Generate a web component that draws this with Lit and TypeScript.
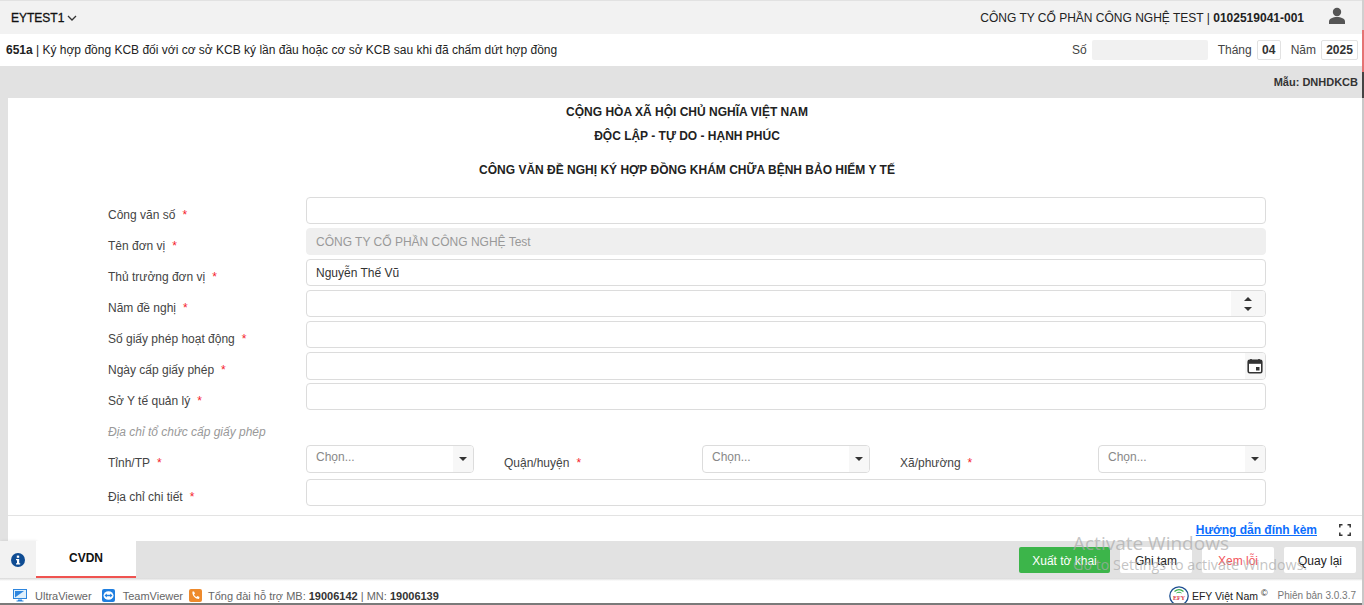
import { LitElement, html, css } from "lit";
import { customElement } from "lit/decorators.js";

const field = (label: string, body: unknown) => html`
  <div class="row">
    <label class="lab">${label}<i class="req">*</i></label>
    ${body}
  </div>`;

const select = () => html`<div class="inp sel"><span class="ph">Chọn...</span><span class="addon caret"><b></b></span></div>`;

@customElement("app-root")
export class AppRoot extends LitElement {
  static styles = css`
    :host { display: block; width: 1364px; height: 605px; overflow: hidden; position: relative; font-family: "Liberation Sans", Arial, sans-serif; font-size: 12px; color: #212529; background: #fff; }
    * { box-sizing: border-box; }
    .page { display: flex; flex-direction: column; height: 605px; }
    .top { height: 34px; flex: none; background: #f2f2f2; border-top: 1px solid #e2e2e2; display: flex; align-items: center; padding: 0 18px 0 11px; justify-content: space-between; }
    .acct { display: flex; align-items: center; gap: 3px; color: #111; -webkit-text-stroke: .3px #111; }
    .co { display: flex; align-items: center; gap: 24px; color: #222; }
    .co svg { margin-top: -4px; }
    .sub { height: 32px; flex: none; background: #fff; display: flex; align-items: center; justify-content: space-between; padding: 0 6px 0 6px; }
    .sub .title { margin-top: -1px; color: #222; }
    .meta { display: flex; align-items: center; color: #444; }
    .so { width: 116px; height: 20px; background: #f1f1f1; border-radius: 2px; margin: 0 10px 0 5px; }
    .box { height: 20px; border: 1px solid #e2e2e2; border-radius: 2px; font-weight: 700; color: #333; display: flex; align-items: center; justify-content: center; }
    .m { width: 24px; margin: 0 10px 0 5px; }
    .y { width: 37px; margin-left: 5px; }
    .band { height: 32px; flex: none; background: #e2e2e2; display: flex; align-items: center; justify-content: flex-end; padding: 0 6px 0 0; font-size: 11px; font-weight: 700; color: #333; }
    .main { flex: 1; min-height: 0; background: #e2e2e2; padding-left: 8px; display: flex; }
    .panel { flex: 1; background: #fff; display: flex; flex-direction: column; }
    .heads { height: 99px; flex: none; display: flex; flex-direction: column; align-items: center; font-weight: 700; color: #222; }
    .heads div { line-height: 14px; margin-right: -2px; }
    .h1 { margin-top: 7px; }
    .h2 { margin-top: 10px; }
    .h3 { margin-top: 20px; }
    .form { height: 319px; flex: none; padding-left: 100px; border-bottom: 1px solid #e3e3e3; }
    .row { display: grid; grid-template-columns: 198px 960px; height: 31px; align-items: start; }
    .lab { color: #444; line-height: 14px; padding-top: 11px; }
    .req { font-style: normal; color: #f5222d; margin-left: 7px; }
    .inp { height: 27px; border: 1px solid #dcdcdc; border-radius: 4px; background: #fff; display: flex; align-items: center; padding-left: 9px; color: #333; overflow: hidden; }
    .dis { background: #efefef; color: #999; border-color: #efefef; }
    .addon { margin-left: auto; height: 100%; display: flex; align-items: center; justify-content: center; background: #f7f7f7; }
    .spin { width: 34px; flex-direction: column; gap: 6px; }
    .spin b { width: 0; height: 0; border-left: 4px solid transparent; border-right: 4px solid transparent; }
    .up { border-bottom: 4px solid #333; }
    .dn { border-top: 4px solid #333; }
    .cal { width: 20px; }
    .h28 { height: 28px; }
    .addr { font-style: italic; color: #999; height: 31px; line-height: 14px; padding-top: 11px; }
    .sel { height: 28px; width: 168px; }
    .ph { color: #888; margin-top: -4px; }
    .caret { width: 20px; }
    .caret b { width: 0; height: 0; border-left: 4px solid transparent; border-right: 4px solid transparent; border-top: 4px solid #333; }
    .tri { display: flex; height: 34px; }
    .tcell { display: flex; width: 396px; }
    .tcell .lab { width: 198px; }
    .links { height: 25px; flex: none; display: flex; align-items: center; justify-content: flex-end; gap: 22px; padding: 3px 13px 0 0; }
    .links a { color: #0d6efd; font-weight: 700; text-decoration: underline; }
    .tabs { height: 37px; flex: none; background: #e2e2e2; display: flex; align-items: stretch; margin-left: -8px; }
    .info { width: 36px; background: #f2f2f2; display: flex; align-items: center; justify-content: center; box-shadow: 1px 0 3px rgba(0,0,0,.1); }
    .tab { width: 100px; background: #fff; border-bottom: 2px solid #ef5350; font-weight: 700; color: #111; display: flex; align-items: flex-start; justify-content: center; padding-top: 10px; }
    .btns { margin-left: auto; display: flex; align-items: flex-start; padding: 6px 8px 0 0; gap: 10px; }
    .btn { height: 26px; width: 72px; padding-top: 2px; background: #fff; border-radius: 2px; display: flex; align-items: center; justify-content: center; color: #222; }
    .go { width: 91px; background: #3cb54a; color: #fff; }
    .err { color: #f2545b; }
    .foot { height: 25px; flex: none; background: linear-gradient(#d8d8d8, #fff 3px); display: flex; align-items: center; font-size: 11px; color: #666; padding: 10px 8px 0 13px; }
    .it { display: inline-flex; align-items: center; }
    .foot b { color: #333; }
    .t1 { margin-left: 8px; }
    .t2 { margin-left: 8px; }
    .t3 { margin-left: 6px; }
    .it2 { margin-left: 10px; }
    .it3 { margin-left: 6px; }
    .rt { margin-left: auto; display: flex; align-items: center; }
    .efy { color: #222; margin-left: 3px; font-size: 10.5px; }
    .ver { margin-left: 10px; color: #777; font-size: 10px; }
    sup { font-size: 9px; line-height: 0; }
    .line { height: 2px; flex: none; background: #7a7a7a; }
    .wm { position: absolute; left: 1073px; top: 531px; color: rgba(170,170,170,.7); font-family: "Open Sans", "Liberation Sans", sans-serif; pointer-events: none; }
    .wm1 { font-size: 19px; line-height: 24px; }
    .wm2 { font-size: 14.3px; line-height: 19px; }
    .edge { position: absolute; right: 0; top: 0; height: 605px; width: 2px; background: linear-gradient(#d0d0d0 0 30px, #e57373 30px 72px, #444 72px 98px, #c8c8c8 98px); }
  `;

  render() {
    return html`
      <div class="page">
        <div class="top">
          <div class="acct">EYTEST1
            <svg width="10" height="10" viewBox="0 0 10 10"><path d="M1 3l4 4 4-4" fill="none" stroke="#333" stroke-width="1.3"/></svg>
          </div>
          <div class="co"><span>CÔNG TY CỔ PHẦN CÔNG NGHỆ TEST | <b>0102519041-001</b></span>
            <svg width="18" height="18" viewBox="0 0 18 18"><circle cx="9" cy="5" r="4.2" fill="#555"/><path d="M1 17v-2.500C1 11.500 5 10 9 10s8 1.500 8 4.500V17z" fill="#555"/></svg>
          </div>
        </div>
        <div class="sub">
          <div class="title"><b>651a</b> | Ký hợp đồng KCB đối với cơ sở KCB ký lần đầu hoặc cơ sở KCB sau khi đã chấm dứt hợp đồng</div>
          <div class="meta">Số<div class="so"></div>Tháng<div class="box m">04</div>Năm<div class="box y">2025</div></div>
        </div>
        <div class="band">Mẫu: DNHDKCB</div>
        <div class="main"><div class="panel">
          <div class="heads">
            <div class="h1">CỘNG HÒA XÃ HỘI CHỦ NGHĨA VIỆT NAM</div>
            <div class="h2">ĐỘC LẬP - TỰ DO - HẠNH PHÚC</div>
            <div class="h3">CÔNG VĂN ĐỀ NGHỊ KÝ HỢP ĐỒNG KHÁM CHỮA BỆNH BẢO HIỂM Y TẾ</div>
          </div>
          <div class="form">
            ${field("Công văn số", html`<div class="inp"></div>`)}
            ${field("Tên đơn vị", html`<div class="inp dis">CÔNG TY CỔ PHẦN CÔNG NGHỆ Test</div>`)}
            ${field("Thủ trưởng đơn vị", html`<div class="inp">Nguyễn Thế Vũ</div>`)}
            ${field("Năm đề nghị", html`<div class="inp"><span class="addon spin"><b class="up"></b><b class="dn"></b></span></div>`)}
            ${field("Số giấy phép hoạt động", html`<div class="inp"></div>`)}
            ${field("Ngày cấp giấy phép", html`<div class="inp h28"><span class="addon cal">
              <svg width="16" height="16" viewBox="0 0 16 16"><path d="M4 1v2M12 1v2" stroke="#333" stroke-width="1.6"/><rect x="1.200" y="2.200" width="13.600" height="12.600" rx="1.500" fill="#fff" stroke="#333" stroke-width="1.600"/><rect x="1.200" y="2.200" width="13.600" height="3.600" fill="#333"/><rect x="9" y="9" width="3.500" height="3.500" fill="#333"/></svg>
            </span></div>`)}
            ${field("Sở Y tế quản lý", html`<div class="inp"></div>`)}
            <div class="addr">Địa chỉ tổ chức cấp giấy phép</div>
            <div class="tri">
              <div class="tcell"><label class="lab">Tỉnh/TP<i class="req">*</i></label>${select()}</div>
              <div class="tcell"><label class="lab">Quận/huyện<i class="req">*</i></label>${select()}</div>
              <div class="tcell"><label class="lab">Xã/phường<i class="req">*</i></label>${select()}</div>
            </div>
            ${field("Địa chỉ chi tiết", html`<div class="inp"></div>`)}
          </div>
          <div class="links"><a>Hướng dẫn đính kèm</a>
            <svg width="12" height="12" viewBox="0 0 12 12" fill="none" stroke="#333" stroke-width="1.500"><path d="M.8 3.500V.8h2.700M8.500.8h2.700v2.700M11.200 8.500v2.700H8.500M3.500 11.200H.8V8.500"/></svg>
          </div>
          <div class="tabs">
            <div class="info"><svg width="14" height="14" viewBox="0 0 14 14"><circle cx="7" cy="7" r="7" fill="#0f4c93"/><rect x="5.800" y="2.600" width="2.400" height="2.200" fill="#fff"/><path d="M5 6h3.200v4.200H9.200v1.200H5v-1.200h1V7.200H5z" fill="#fff"/></svg></div>
            <div class="tab">CVDN</div>
            <div class="btns">
              <div class="btn go">Xuất tờ khai</div><div class="btn">Ghi tạm</div><div class="btn err">Xem lỗi</div><div class="btn">Quay lại</div>
            </div>
          </div>
        </div></div>
        <div class="foot">
          <span class="it"><svg width="14" height="13" viewBox="0 0 14 13"><rect x=".5" y=".5" width="13" height="9" fill="#dff0fc" stroke="#2e86de"/><path d="M2 8.500L11 2H2z" fill="#2e86de"/><path d="M5 10.500h4v1h1.500v1h-7v-1H5z" fill="#2e86de"/></svg><span class="t1">UltraViewer</span></span>
          <span class="it it2"><svg width="13" height="13" viewBox="0 0 13 13"><rect width="13" height="13" rx="2" fill="#1f7fe0"/><ellipse cx="6.500" cy="6.500" rx="5" ry="4.300" fill="#fff"/><path d="M2.500 6.500l2.300-2v1.300h3.400V4.500l2.300 2-2.300 2V7.200H4.800v1.300z" fill="#1f7fe0"/></svg><span class="t2">TeamViewer</span></span>
          <span class="it it3"><svg width="13" height="13" viewBox="0 0 13 13"><rect width="13" height="13" rx="2" fill="#ee8a2c"/><path d="M3.500 2.500c-.8 4 3 7.500 6.500 7.500l.5-2-2-1-1 1C6 7.500 5.500 6.500 5 5.500l1-1-1-2z" fill="#fff"/></svg><span class="t3">Tổng đài hỗ trợ MB: <b>19006142</b> | MN: <b>19006139</b></span></span>
          <div class="rt">
            <svg width="20" height="20" viewBox="0 0 20 20"><circle cx="10" cy="10" r="9.200" fill="#fff" stroke="#1d4f91" stroke-width="1.300"/><path d="M5.500 5.500c3-2.500 6-2.500 9 0" stroke="#3cae49" stroke-width="1.200" fill="none"/><path d="M7.500 7c1.700-1 3.300-1 5 0" stroke="#3cae49" fill="none"/><text x="10" y="13.500" text-anchor="middle" font-family="Liberation Serif, serif" font-weight="700" font-size="6" fill="#d9363e">EFY</text></svg>
            <span class="efy">EFY Việt Nam <sup>©</sup></span><span class="ver">Phiên bản 3.0.3.7</span>
          </div>
        </div>
        <div class="line"></div>
      </div>
      <div class="edge"></div>
      <div class="wm"><div class="wm1">Activate Windows</div><div class="wm2">Go to Settings to activate Windows.</div></div>
    `;
  }
}
